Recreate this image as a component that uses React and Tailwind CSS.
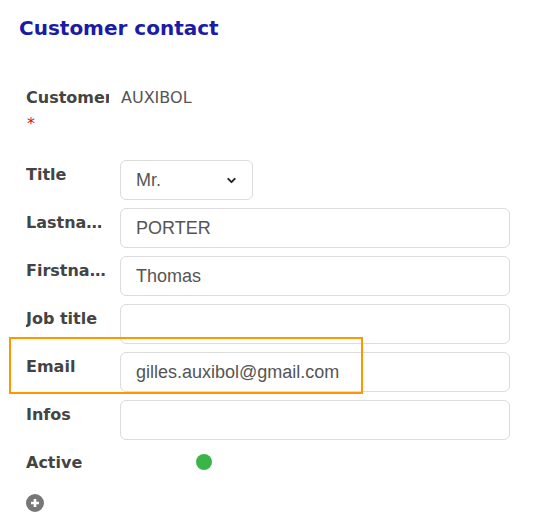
import { ChevronDown } from 'lucide-react';

const labelFont = { fontFamily: '"DejaVu Sans", "Open Sans", sans-serif' };
const inputFont = { fontFamily: '"Liberation Sans", Arial, sans-serif' };

function Row({ label, children }) {
  return (
    <div className="flex items-start">
      <div
        className="w-[94px] shrink-0 pt-[3px] pr-[12px] text-[16px] leading-6 font-bold text-[#444] truncate"
        style={labelFont}
      >
        {label}
      </div>
      {children}
    </div>
  );
}

function TextInput({ value }) {
  return (
    <div
      className="w-[390px] h-[40px] rounded-[6px] border border-[#dcdcdc] bg-white px-[15px] flex items-center text-[18px] text-[#555]"
      style={inputFont}
    >
      {value}
    </div>
  );
}

export default function App() {
  return (
    <div className="w-[540px] h-[531px] bg-white relative overflow-hidden">
      <h1
        className="pl-[19px] pt-[14px] text-[20px] leading-7 font-bold text-[#1b1ba6]"
        style={labelFont}
      >
        Customer contact
      </h1>

      <div className="pl-[26px] mt-[44px]">
        <div className="flex items-start">
          <div
            className="w-[83px] mr-[12px] shrink-0 overflow-hidden whitespace-nowrap text-[16px] leading-6 font-bold text-[#444]"
            style={labelFont}
          >
            Customer
          </div>
          <div className="text-[16px] leading-6 text-[#555]" style={labelFont}>
            AUXIBOL
          </div>
        </div>
        <div className="text-[16px] leading-5 text-[#e01010] pl-[1px] pt-[4px]" style={labelFont}>
          *
        </div>

        <div className="mt-[26px] flex flex-col gap-[8px]">
          <Row label="Title">
            <div
              className="w-[133px] h-[40px] rounded-[6px] border border-[#dcdcdc] bg-white pl-[15px] pr-[14px] flex items-center justify-between text-[18px] text-[#555]"
              style={inputFont}
            >
              <span>Mr.</span>
              <ChevronDown className="w-[13px] h-[13px] text-[#222]" strokeWidth={3.5} />
            </div>
          </Row>
          <Row label="Lastname">
            <TextInput value="PORTER" />
          </Row>
          <Row label="Firstname">
            <TextInput value="Thomas" />
          </Row>
          <Row label="Job title">
            <TextInput value="" />
          </Row>
          <Row label="Email">
            <TextInput value="gilles.auxibol@gmail.com" />
          </Row>
          <Row label="Infos">
            <TextInput value="" />
          </Row>
          <Row label="Active">
            <div className="ml-[76px] mt-[6px] w-[16px] h-[16px] rounded-full bg-[#3bb54a]" />
          </Row>
        </div>

        <div className="mt-[19px] w-[18px] h-[18px] rounded-full bg-[#777] flex items-center justify-center">
          <svg width="10" height="10" viewBox="0 0 10 10">
            <path d="M5 1v8M1 5h8" stroke="#fff" strokeWidth="2.6" />
          </svg>
        </div>
      </div>

      <div className="absolute left-[9px] top-[337px] w-[354px] h-[57px] border-2 border-[#ff9800] pointer-events-none" />
    </div>
  );
}
